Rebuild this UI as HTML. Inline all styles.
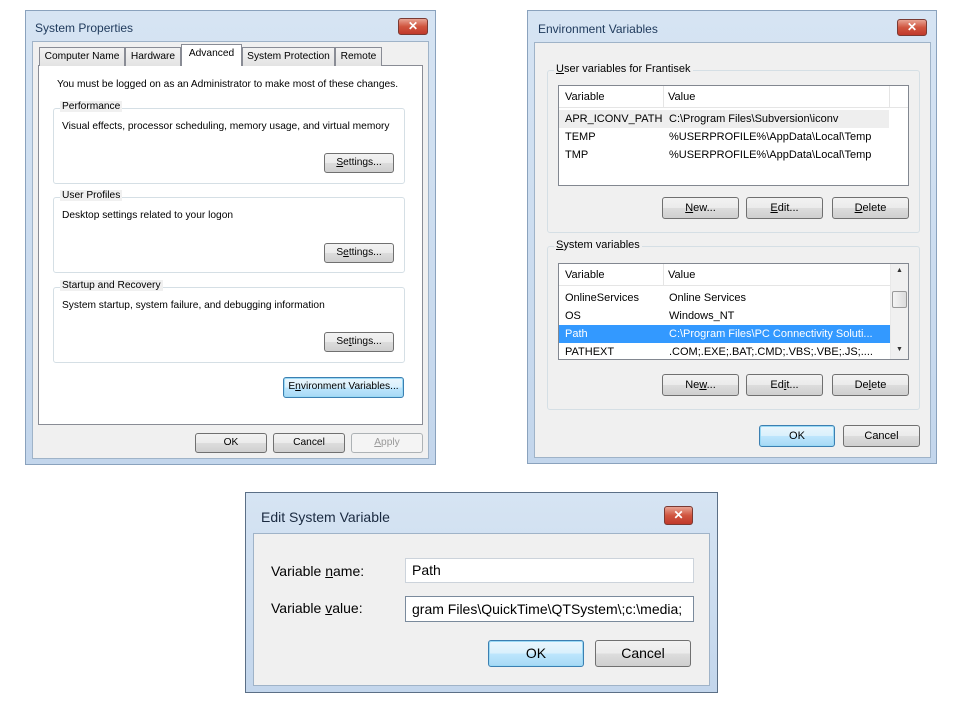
<!DOCTYPE html>
<html><head><style>
body{margin:0;width:975px;height:703px;background:#fff;position:relative;overflow:hidden;font-family:"Liberation Sans",sans-serif;font-size:11px;color:#000}
div,span{position:absolute;box-sizing:border-box;white-space:nowrap}
.win{background:linear-gradient(#d6e4f3,#c3d6ec);border:1px solid #8aa2bd}
.client{background:#f0f0f0;border:1px solid #9fb3c8}
.title{color:#1e395b;font-size:12px}
.x{width:30px;height:17px;border-radius:3px;border:1px solid #7a3a33;background:linear-gradient(#e8a393,#d0553f 50%,#c0392b);color:#fff;font-weight:bold;text-align:center;font-size:12px;line-height:15px}
.btn{border:1px solid #707070;border-radius:3px;background:linear-gradient(#f2f2f2 0,#ebebeb 50%,#dddddd 50%,#cfcfcf);text-align:center;line-height:18px}
.def{border-color:#3c7fb1;box-shadow:inset 0 0 0 1px #9ad9f5;background:linear-gradient(#eaf6fd,#d9f0fc 50%,#bee6fd 50%,#a7d9f5)}
.grp{border:1px solid #d5dfe5;border-radius:3px}
.gl{background:#f0f0f0;padding:0 2px;top:-8px;left:6px}
.panel{background:#fff;border:1px solid #898c95}
.tab{border:1px solid #898c95;border-bottom:none;background:linear-gradient(#f2f2f2,#e3e3e3);text-align:center;line-height:17px;height:19px}
.list{background:#fff;border:1px solid #828790}
.row{left:0;height:18px;line-height:18px}
.c1{left:6px}.c2{left:110px}
u{text-decoration:underline}
.d1{font-size:10.2px}
</style></head><body>

<!-- System Properties -->
<div class="win d1" style="left:25px;top:10px;width:411px;height:455px">
 <span class="title" style="left:9px;top:10px">System Properties</span>
 <div class="x" style="left:372px;top:7px">✕</div>
 <div class="client" style="left:6px;top:30px;width:397px;height:418px">
  <div class="panel" style="left:5px;top:23px;width:385px;height:360px"></div>
  <div class="tab" style="left:6px;top:5px;width:86px">Computer Name</div>
  <div class="tab" style="left:92px;top:5px;width:56px">Hardware</div>
  <div class="tab" style="left:148px;top:2px;width:61px;height:22px;background:#fff;z-index:2">Advanced</div>
  <div class="tab" style="left:209px;top:5px;width:93px">System Protection</div>
  <div class="tab" style="left:302px;top:5px;width:47px">Remote</div>
  <span style="left:24px;top:37px">You must be logged on as an Administrator to make most of these changes.</span>
  <div class="grp" style="left:20px;top:66px;width:352px;height:76px"><span class="gl">Performance</span>
   <span style="left:8px;top:12px">Visual effects, processor scheduling, memory usage, and virtual memory</span>
   <div class="btn" style="left:270px;top:44px;width:70px;height:20px"><u>S</u>ettings...</div></div>
  <div class="grp" style="left:20px;top:155px;width:352px;height:76px"><span class="gl">User Profiles</span>
   <span style="left:8px;top:12px">Desktop settings related to your logon</span>
   <div class="btn" style="left:270px;top:45px;width:70px;height:20px">S<u>e</u>ttings...</div></div>
  <div class="grp" style="left:20px;top:245px;width:352px;height:76px"><span class="gl">Startup and Recovery</span>
   <span style="left:8px;top:12px">System startup, system failure, and debugging information</span>
   <div class="btn" style="left:270px;top:44px;width:70px;height:20px">Se<u>t</u>tings...</div></div>
  <div class="btn def" style="left:250px;top:335px;width:121px;height:21px">E<u>n</u>vironment Variables...</div>
  <div class="btn" style="left:162px;top:391px;width:72px;height:20px">OK</div>
  <div class="btn" style="left:240px;top:391px;width:72px;height:20px">Cancel</div>
  <div class="btn" style="left:318px;top:391px;width:72px;height:20px;color:#9a9a9a;border-color:#adb2b5;background:#f4f4f4"><u>A</u>pply</div>
 </div>
</div>

<!-- Environment Variables -->
<div class="win" style="left:527px;top:10px;width:410px;height:454px">
 <span class="title" style="left:10px;top:11px">Environment Variables</span>
 <div class="x" style="left:369px;top:8px">✕</div>
 <div class="client" style="left:6px;top:31px;width:397px;height:416px">
  <div class="grp" style="left:12px;top:27px;width:373px;height:163px"><span class="gl"><u>U</u>ser variables for Frantisek</span>
   <div class="list" style="left:10px;top:14px;width:351px;height:101px">
    <div class="row" style="top:0;width:349px;height:22px;line-height:22px;border-bottom:1px solid #e5e5e5"><span class="c1">Variable</span><span class="c2" style="border-left:1px solid #e5e5e5;padding-left:4px;left:104px;height:22px">Value</span><span style="left:330px;height:22px;border-left:1px solid #e5e5e5"></span></div>
    <div class="row" style="top:24px;width:330px;background:#eeeeee"><span class="c1">APR_ICONV_PATH</span><span class="c2">C:\Program Files\Subversion\iconv</span></div>
    <div class="row" style="top:42px"><span class="c1">TEMP</span><span class="c2">%USERPROFILE%\AppData\Local\Temp</span></div>
    <div class="row" style="top:60px"><span class="c1">TMP</span><span class="c2">%USERPROFILE%\AppData\Local\Temp</span></div>
   </div>
   <div class="btn" style="left:114px;top:126px;width:77px;height:22px;line-height:20px"><u>N</u>ew...</div>
   <div class="btn" style="left:198px;top:126px;width:77px;height:22px;line-height:20px"><u>E</u>dit...</div>
   <div class="btn" style="left:284px;top:126px;width:77px;height:22px;line-height:20px"><u>D</u>elete</div>
  </div>
  <div class="grp" style="left:12px;top:203px;width:373px;height:164px"><span class="gl"><u>S</u>ystem variables</span>
   <div class="list" style="left:10px;top:16px;width:351px;height:97px">
    <div class="row" style="top:0;width:331px;height:22px;line-height:22px;border-bottom:1px solid #e5e5e5"><span class="c1">Variable</span><span class="c2" style="border-left:1px solid #e5e5e5;padding-left:4px;left:104px;height:22px">Value</span></div>
    <div class="row" style="top:25px"><span class="c1">OnlineServices</span><span class="c2">Online Services</span></div>
    <div class="row" style="top:43px"><span class="c1">OS</span><span class="c2">Windows_NT</span></div>
    <div class="row" style="top:61px;width:331px;background:#3399ff;color:#fff"><span class="c1">Path</span><span class="c2">C:\Program Files\PC Connectivity Soluti...</span></div>
    <div class="row" style="top:79px"><span class="c1">PATHEXT</span><span class="c2">.COM;.EXE;.BAT;.CMD;.VBS;.VBE;.JS;....</span></div>
    <div style="left:331px;top:0;width:18px;height:95px;background:#f0f0f0;border-left:1px solid #e8e8e8">
     <span style="left:5px;top:3px;font-size:7px;color:#333">▲</span>
     <div style="left:1px;top:27px;width:15px;height:17px;border:1px solid #999;border-radius:2px;background:linear-gradient(90deg,#f4f4f4,#dcdcdc)"></div>
     <span style="left:5px;top:82px;font-size:7px;color:#333">▼</span>
    </div>
   </div>
   <div class="btn" style="left:114px;top:127px;width:77px;height:22px;line-height:20px">Ne<u>w</u>...</div>
   <div class="btn" style="left:198px;top:127px;width:77px;height:22px;line-height:20px">Ed<u>i</u>t...</div>
   <div class="btn" style="left:284px;top:127px;width:77px;height:22px;line-height:20px">De<u>l</u>ete</div>
  </div>
  <div class="btn def" style="left:224px;top:382px;width:76px;height:22px;line-height:20px">OK</div>
  <div class="btn" style="left:308px;top:382px;width:77px;height:22px;line-height:20px">Cancel</div>
 </div>
</div>

<!-- Edit System Variable -->
<div class="win" style="left:245px;top:492px;width:473px;height:201px;border-color:#5b6f86">
 <span class="title" style="left:15px;top:16px;font-size:14px;color:#1a2a40">Edit System Variable</span>
 <div class="x" style="left:418px;top:13px;width:29px;height:19px;line-height:17px">✕</div>
 <div class="client" style="left:7px;top:40px;width:457px;height:153px">
  <span style="left:17px;top:29px;font-size:14px">Variable <u>n</u>ame:</span>
  <span style="left:17px;top:66px;font-size:14px">Variable <u>v</u>alue:</span>
  <div style="left:151px;top:24px;width:289px;height:25px;background:#fff;border:1px solid #ccd3db;font-size:14px;line-height:23px;padding-left:6px">Path</div>
  <div style="left:151px;top:62px;width:289px;height:26px;background:#fff;border:1px solid #7a8a9c;font-size:14px;line-height:24px;padding-left:6px;overflow:hidden">gram Files\QuickTime\QTSystem\;c:\media;</div>
  <div class="btn def" style="left:234px;top:106px;width:96px;height:27px;line-height:25px;font-size:14px">OK</div>
  <div class="btn" style="left:341px;top:106px;width:96px;height:27px;line-height:25px;font-size:14px">Cancel</div>
 </div>
</div>
</body></html>
